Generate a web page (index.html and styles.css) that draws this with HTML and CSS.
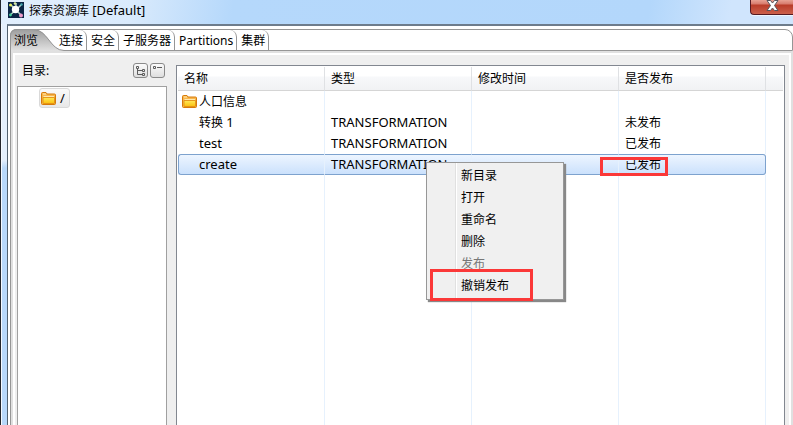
FILE: index.html
```html
<!DOCTYPE html>
<html lang="zh-CN">
<head>
<meta charset="utf-8">
<title>探索资源库 [Default]</title>
<link rel="stylesheet" href="styles.css">
</head>
<body>
<svg class="defs" aria-hidden="true">
  <defs>
    <linearGradient id="gold" x1="0" y1="0" x2="0" y2="1"><stop offset="0" stop-color="#ffe95a"/><stop offset="1" stop-color="#fcc00c"/></linearGradient>
    <linearGradient id="tabfill" x1="0" y1="0" x2="0" y2="1"><stop offset="0" stop-color="#9c9c9c"/><stop offset="1" stop-color="#e2e2e2"/></linearGradient>
    <symbol id="folder" viewBox="0 0 15 13">
      <path d="M.5 11.500v-10q0-1 1-1h3.500l1 1.500h7.500q1 0 1 1v8.500q0 1-1 1H1.500q-1 0-1-1z" fill="#f8b64c" stroke="#d77a08"/>
      <path d="M2 2h3M2.500 4.500H13" stroke="#ffe9b0"/>
      <path d="M2 5.500h11.500v5.500q0 .5-.5.500H2.500q-.5 0-.5-.5z" fill="url(#gold)" stroke="#e08a10" stroke-width=".8"/>
    </symbol>
  </defs>
</svg>
<div class="window">
  <header class="titlebar">
    <svg class="logo" viewBox="0 0 16 16" aria-hidden="true">
      <path d="M0 0h16v16H0z" fill="#0b2545"/>
      <path d="M8 8L3 3M8 8V1M8 8l5-5M8 8l-6 5M8 8l5 5" stroke="#b9d5c8" stroke-width="1.500"/>
      <circle cx="7.500" cy="7.500" r="3.700" fill="#fff"/>
      <circle cx="2.500" cy="3" r="1.500" fill="#e7f05c"/><circle cx="7" cy="1.500" r="1.300" fill="#d9eaa0"/><circle cx="13.500" cy="2.500" r="1.200" fill="#44a8b0"/>
      <circle cx="2.500" cy="13" r="1.400" fill="#43cf98"/><circle cx="13" cy="13.500" r="2" fill="#ee9ac9"/>
    </svg>
    <h1>探索资源库 <span class="latin">[Default]</span></h1>
    <button class="close" aria-label="关闭">
      <svg viewBox="0 0 13 11" aria-hidden="true"><path d="M1 .5h3.500l2 2.500 2-2.500H12L8.500 5.500l3.500 5H8.500l-2-2.500-2 2.500H1l3.500-5z" fill="#fff" stroke="#55565f"/></svg>
    </button>
  </header>
  <main class="client">
    <nav class="tabs" role="tablist">
      <button class="tab active" role="tab" aria-selected="true">
        <svg class="swoosh" viewBox="0 0 54 22" aria-hidden="true"><path d="M0 22V7Q0 0 7 0h16c15 0 17 21 31 21v1z" fill="url(#tabfill)"/><path d="M.5 22V7Q.5.5 7 .5h16c15 0 17 21 31 21" fill="none" stroke="#969696"/></svg>
        <span>浏览</span>
      </button>
      <button class="tab" role="tab"><span>连接</span></button>
      <button class="tab" role="tab">安全</button>
      <button class="tab" role="tab">子服务器</button>
      <button class="tab" role="tab">Partitions</button>
      <button class="tab" role="tab">集群</button>
    </nav>
    <div class="content">
      <section class="sidebar">
        <div class="toolbar">
          <h2>目录:</h2>
          <button class="tool" aria-label="展开"><svg viewBox="0 0 15 15" aria-hidden="true"><path d="M3.500 3.500h2v2h-2zM9.500 6.500h2v2h-2zM9.500 10.500h2v2h-2zM4.500 5.500v6h5M4.500 7.500h5" fill="none" stroke="#5c5c5c"/></svg></button>
          <button class="tool" aria-label="折叠"><svg viewBox="0 0 15 15" aria-hidden="true"><path d="M3.500 3.500h2v2h-2zM7 4.500h5" fill="none" stroke="#5c5c5c"/></svg></button>
        </div>
        <div class="tree" role="tree">
          <div class="node" role="treeitem"><svg class="folder" aria-hidden="true"><use href="#folder"/></svg><span class="latin">/</span></div>
        </div>
      </section>
      <section class="list">
        <table>
          <colgroup><col class="c"><col class="c"><col class="c"><col class="c"><col></colgroup>
          <thead><tr><th>名称</th><th>类型</th><th>修改时间</th><th>是否发布</th><th></th></tr></thead>
          <tbody>
            <tr><td><div class="name"><svg class="folder" aria-hidden="true"><use href="#folder"/></svg>人口信息</div></td><td></td><td></td><td></td><td></td></tr>
            <tr><td class="item">转换 <span class="latin">1</span></td><td class="latin">TRANSFORMATION</td><td></td><td>未发布</td><td></td></tr>
            <tr><td class="item latin">test</td><td class="latin">TRANSFORMATION</td><td></td><td>已发布</td><td></td></tr>
            <tr class="selected"><td class="item latin">create</td><td class="latin">TRANSFORMATION</td><td></td><td><div class="marked">已发布</div></td><td></td></tr>
            <tr class="filler"><td></td><td></td><td></td><td></td><td></td></tr>
          </tbody>
        </table>
      </section>
    </div>
  </main>
  <div class="menu" role="menu">
    <button role="menuitem">新目录</button>
    <button role="menuitem">打开</button>
    <button role="menuitem">重命名</button>
    <button role="menuitem">删除</button>
    <button role="menuitem" disabled>发布</button>
    <button role="menuitem" class="revoke">撤销发布</button>
  </div>
</div>
</body>
</html>
```
FILE: styles.css
```css
*, *::after { box-sizing: border-box; }
body { margin: 0; font: 12px/20px "Noto Sans", "Noto Sans CJK SC", sans-serif; color: #000; }
button { font: inherit; color: inherit; border: 0; padding: 0; background: none; }
h1, h2 { margin: 0; font-size: 12px; font-weight: 400; }
svg { display: block; }
.defs { position: absolute; width: 0; height: 0; }
.latin { font-family: "Noto Sans", sans-serif; font-size: 13px; }

.window {
  position: relative; display: flex; flex-direction: column; min-height: 100vh; overflow: hidden;
  padding-left: 5px; border-left: 1px solid #24262c; box-shadow: inset 1px 0 #f4f9ff;
  background: linear-gradient(#e4effc 0, #e4effc 160px, #b8d8fa 168px);
}
.titlebar {
  display: flex; align-items: flex-start; height: 24px; margin-left: -5px; padding-left: 7px;
  background: linear-gradient(100deg, #e2effd 0, #d9eafc 130px, #b5d8fb 230px, #b3d7fb 640px, #d0e5fd 720px, #d0e5fd 100%);
}
.logo { width: 16px; height: 16px; margin-top: 2px; }
h1 { flex: 1; margin-left: 5px; }
.close {
  display: flex; justify-content: center; width: 43px; height: 15px; border: 1px solid #541a22; border-top: 0; border-right: 0;
  border-radius: 0 0 0 4px; background: linear-gradient(#e8a294 0, #d77b6d 4px, #b93c29 5px, #cb604c 100%);
  box-shadow: 0 1px #edf6ff;
}
.close svg { width: 13px; height: 11px; }

.client {
  flex: 1; display: flex; flex-direction: column; margin-left: 1px; padding: 3px 0 0 2px;
  border-top: 2px solid #6d7c8c; border-left: 1px solid #51606e; background: #fff;
}
.tabs { position: relative; display: flex; height: 22px; border: 1px solid #969696; border-radius: 7px 8px 0 0; }
.tab {
  position: relative; padding: 0 3px 0 4px; line-height: 22px;
  border-right: 1px solid #969696; border-radius: 0 7px 0 0;
}
.tab.active { width: 44px; padding: 0 0 0 3px; border: 0; text-align: left; }
.tab span { position: relative; }
.swoosh { position: absolute; left: -1px; top: -1px; width: 54px; height: 22px; }

.content {
  flex: 1; display: flex; gap: 9px; margin-left: 1px; padding: 12px 6px 0 4px; background: #efefef;
  border: solid #e0e0e0; border-width: 2px 2px 0;
  box-shadow: inset 2px 2px #fff, inset -2px 0 #fff, -1px 0 #969696;
}
.sidebar { display: flex; flex-direction: column; width: 150px; }
.toolbar { display: flex; gap: 2px; height: 21px; padding: 0 2px 0 5px; }
.toolbar h2 { flex: 1; line-height: 12px; }
.tool { width: 15px; height: 15px; margin-top: -2px; border: 1px solid #898989; border-radius: 3px; background: linear-gradient(#fafafa, #dedede); }
.tool svg { width: 15px; height: 15px; margin: -1px; }
.tree { flex: 1; border: solid #a0a0a0; border-width: 1px 1px 0; background: #fff; }
.node {
  display: flex; align-items: center; gap: 4px; width: 31px; height: 20px; margin: 1px 0 0 21px; padding-left: 1px;
  border: 1px solid #d9d9d9; border-radius: 3px; background: linear-gradient(#fafafa, #e8e8e8);
}
.folder { flex: none; width: 15px; height: 13px; }

.list { flex: 1; display: flex; padding: 1px 1px 0; border: solid #828790; border-width: 1px 1px 0; background: #fff; }
table { width: 100%; height: 100%; table-layout: fixed; border-collapse: separate; border-spacing: 0; }
.c { width: 147px; }
th {
  height: 24px; padding: 0 6px; text-align: left; font-weight: 400; border-bottom: 1px solid #d5d5d5; border-right: 1px solid #dfe1e4;
  background: linear-gradient(#fff 0, #fff 9px, #f7f8fa 10px, #f1f2f4 100%);
}
td { height: 21px; padding: 0 6px; border-right: 1px solid #e6f1fd; white-space: nowrap; line-height: 19px; }
th:last-child, td:last-child { border-right: 0; padding: 0; }
.filler td { height: auto; }
.name { display: flex; align-items: center; gap: 2px; margin-left: -2px; }
.item { padding-left: 21px; }
.selected td { background: linear-gradient(#edf5ff, #cbe1fc); border-top: 1px solid #7da2ce; border-bottom: 1px solid #7da2ce; }
.selected td:first-child { border-left: 1px solid #7da2ce; border-radius: 3px 0 0 3px; padding-left: 20px; }
.selected td:nth-child(4) { border-right-color: #7da2ce; border-radius: 0 3px 3px 0; }
.selected td:last-child { background: none; border: 0; }
.marked { position: relative; }
.marked::after { content: ""; position: absolute; left: -25px; top: 2px; width: 68px; height: 19px; border: 3px solid #fb3838; }

.menu {
  position: absolute; left: 425px; top: 162px; width: 138px; padding: 2px; border: 1px solid #979797;
  background: linear-gradient(90deg, transparent 28px, #e0e0e0 28px, #e0e0e0 29px, #fff 29px, #fff 30px, transparent 30px) #f0f0f0;
  box-shadow: 2px 2px 1px #888;
}
.menu button { position: relative; display: block; width: 100%; height: 22px; padding-left: 32px; line-height: 20px; text-align: left; }
.menu button:disabled { color: #777; }
.revoke::after { content: ""; position: absolute; left: 1px; top: -6px; width: 103px; height: 32px; border: 3px solid #fb3838; }
```
